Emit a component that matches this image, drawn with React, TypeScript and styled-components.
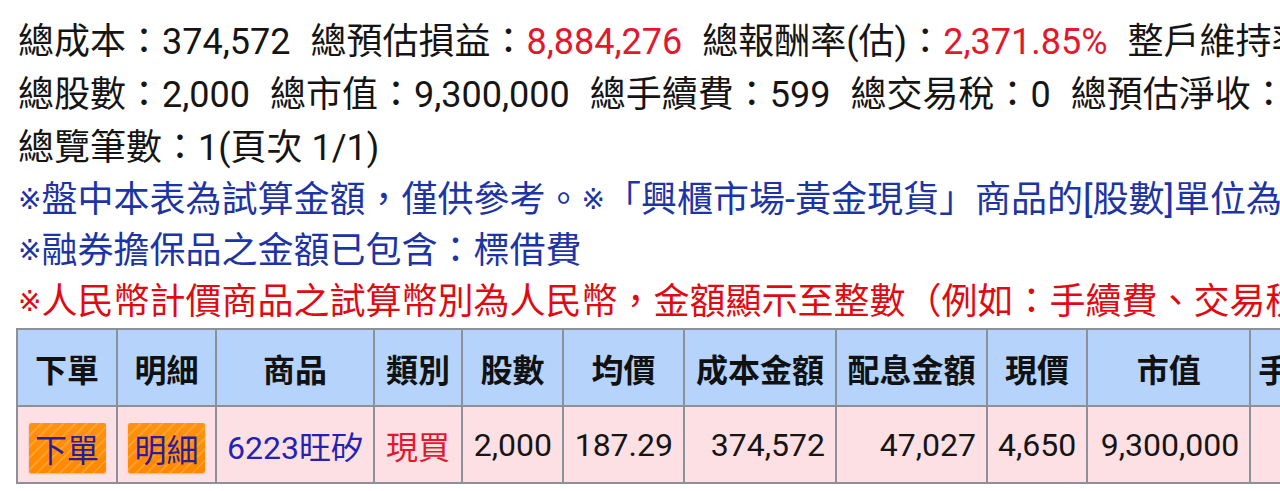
import React from "react";
import styled, { createGlobalStyle } from "styled-components";

const Global = createGlobalStyle`
  html, body {
    margin: 0;
    padding: 0;
    background: #ffffff;
    overflow: hidden;
  }
  body {
    font-family: Roboto, "Noto Sans CJK TC", sans-serif;
    color: #151515;
  }
`;

const Page = styled.div`
  padding: 16px 0 0 16px;
  width: 1500px;
`;

const Summary = styled.div`
  padding-left: 2px;
  font-size: 36px;
  line-height: 53px;
`;

const Line = styled.div`
  display: flex;
  gap: 20px;
  white-space: nowrap;
`;

const Value = styled.span<{ $red?: boolean }>`
  color: ${(p) => (p.$red ? "#e3182d" : "inherit")};
`;

const Notes = styled.div`
  padding-left: 2px;
  font-size: 36px;
  line-height: 51px;
`;

const Note = styled.div<{ $red?: boolean }>`
  white-space: nowrap;
  height: 51px;
  color: ${(p) => (p.$red ? "#e00b12" : "#1d34a6")};
`;

const Mark = styled.span`
  font-family: "DejaVu Sans", "Noto Sans CJK TC", sans-serif;
  font-size: 28px;
  line-height: 0;
  display: inline-block;
  vertical-align: 3px;
`;

const Table = styled.table`
  border-collapse: collapse;
  table-layout: fixed;
  font-size: 32px;
  white-space: nowrap;
`;

const HeadCell = styled.th`
  background: #b5d3fb;
  border: 2px solid #8c9099;
  height: 75px;
  padding: 0 6px;
  font-weight: 700;
  color: #111;
  text-align: center;
`;

const Cell = styled.td<{ $align?: "left" | "center" | "right"; $color?: string }>`
  background: #fde0e4;
  border: 2px solid #8c9099;
  height: 75px;
  padding: 0 10px;
  text-align: ${(p) => p.$align ?? "right"};
  color: ${(p) => p.$color ?? "#151515"};
`;

const OrderButton = styled.span`
  display: inline-flex;
  align-items: center;
  justify-content: center;
  width: 77px;
  height: 50px;
  margin-top: 6px;
  box-sizing: border-box;
  color: #2b1c9c;
  background: repeating-linear-gradient(
      135deg,
      rgba(255, 196, 110, 0.35) 0 2px,
      transparent 2px 8px
    ),
    linear-gradient(#ff9210, #ff8800);
  box-shadow: 0 1px 2px rgba(0, 0, 0, 0.2);
  border-radius: 2px;
`;

const cols = [100, 99, 158, 88, 101, 121, 152, 151, 100, 163, 112];

export default function App() {
  return (
    <>
      <Global />
      <Page>
        <Summary>
          <Line>
            <span>總成本：374,572</span>
            <span>
              總預估損益：<Value $red>8,884,276</Value>
            </span>
            <span>
              總報酬率(估)：<Value $red>2,371.85%</Value>
            </span>
            <span>整戶維持率：</span>
          </Line>
          <Line>
            <span>總股數：2,000</span>
            <span>總市值：9,300,000</span>
            <span>總手續費：599</span>
            <span>總交易稅：0</span>
            <span>總預估淨收：9,299,401</span>
          </Line>
          <Line>
            <span>總覽筆數：1(頁次 1/1)</span>
          </Line>
        </Summary>
        <Notes>
          <Note>
            <Mark>※</Mark>盤中本表為試算金額，僅供參考。<Mark>※</Mark>「興櫃市場-黃金現貨」商品的[股數]單位為公克
          </Note>
          <Note>
            <Mark>※</Mark>融券擔保品之金額已包含：標借費
          </Note>
          <Note $red>
            <Mark>※</Mark>人民幣計價商品之試算幣別為人民幣，金額顯示至整數（例如：手續費、交易稅）
          </Note>
        </Notes>
        <Table>
          <colgroup>
            {cols.map((w, i) => (
              <col key={i} style={{ width: w }} />
            ))}
          </colgroup>
          <thead>
            <tr>
              <HeadCell>下單</HeadCell>
              <HeadCell>明細</HeadCell>
              <HeadCell>商品</HeadCell>
              <HeadCell>類別</HeadCell>
              <HeadCell>股數</HeadCell>
              <HeadCell>均價</HeadCell>
              <HeadCell>成本金額</HeadCell>
              <HeadCell>配息金額</HeadCell>
              <HeadCell>現價</HeadCell>
              <HeadCell>市值</HeadCell>
              <HeadCell>手續費</HeadCell>
            </tr>
          </thead>
          <tbody>
            <tr>
              <Cell $align="center">
                <OrderButton>下單</OrderButton>
              </Cell>
              <Cell $align="center">
                <OrderButton>明細</OrderButton>
              </Cell>
              <Cell $align="center" $color="#2222b8">
                6223旺矽
              </Cell>
              <Cell $align="center" $color="#e3182d">
                現買
              </Cell>
              <Cell>2,000</Cell>
              <Cell>187.29</Cell>
              <Cell>374,572</Cell>
              <Cell>47,027</Cell>
              <Cell>4,650</Cell>
              <Cell>9,300,000</Cell>
              <Cell>599</Cell>
            </tr>
          </tbody>
        </Table>
      </Page>
    </>
  );
}
